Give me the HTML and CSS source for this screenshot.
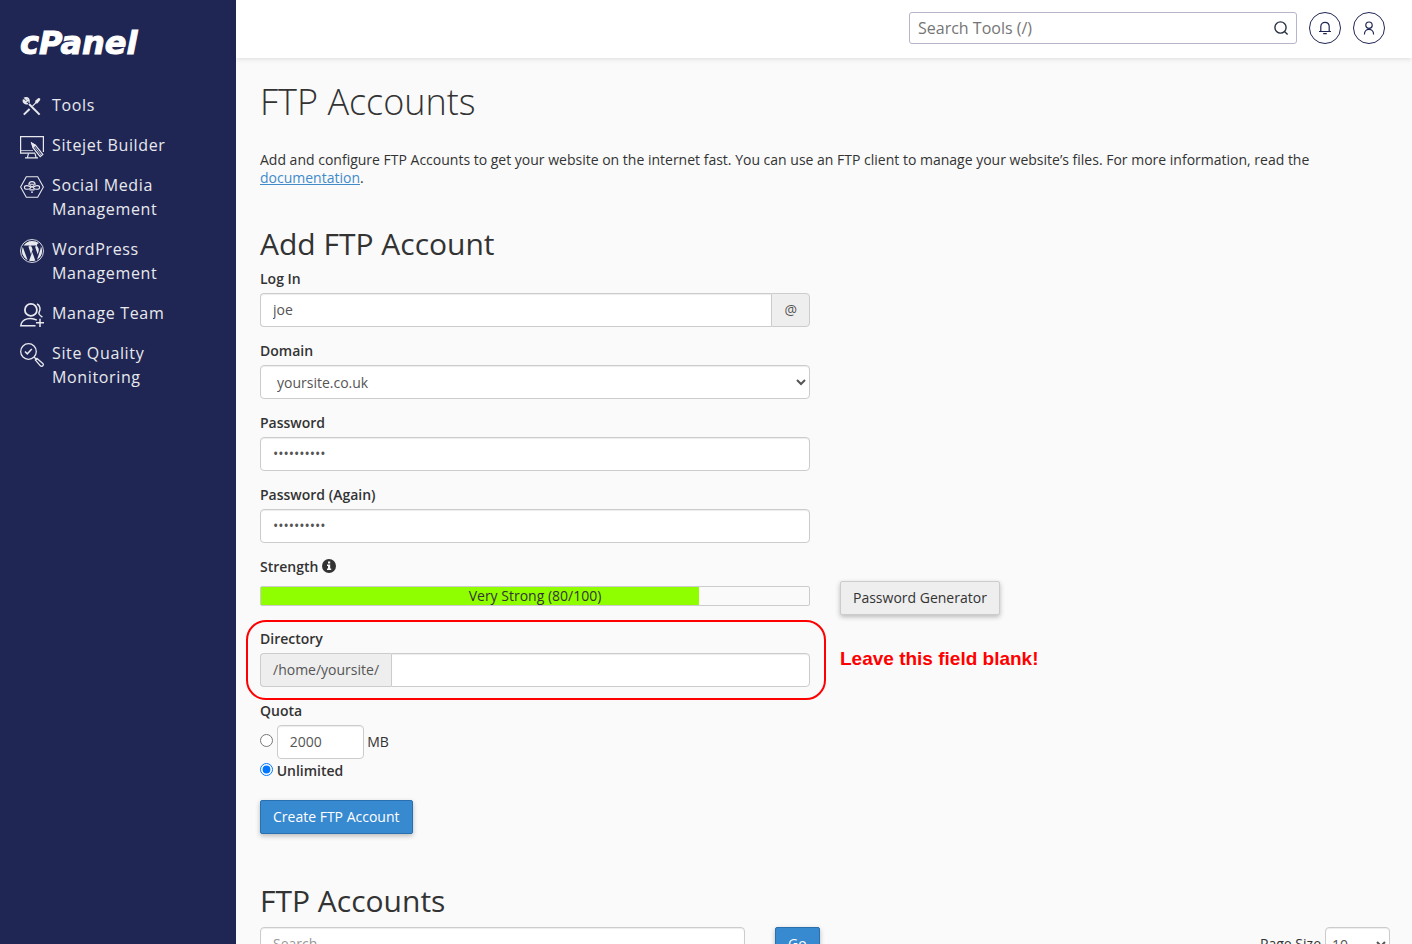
FILE: index.html
```html
<!DOCTYPE html>
<html lang="en">
<head>
  <meta charset="UTF-8" />
  <meta name="viewport" content="width=device-width, initial-scale=1.0"/>
  <title>cPanel - FTP Accounts</title>
  <link rel="stylesheet" href="styles.css">
</head>
<body>

<!-- Sidebar -->
<aside class="sidebar">
  <a href="#" class="logo">cPanel</a>
  <nav class="nav">
    <a href="#">
      <svg viewBox="0 0 24 24" fill="none" stroke="currentColor">
        <path d="M9 9L19.6 19.6" stroke-width="2"/>
        <path d="M3.4 4.6L6 7.2L7.6 5.6L5 3C7.6 2 10 4.4 9 7.8M3.4 4.6C2.8 7.4 5 9.4 8 8.4" stroke-width="1.6"/>
        <path d="M3.8 19.6L9.6 14" stroke-width="2"/>
        <path d="M12.5 11.2L15.5 8.2" stroke-width="1.2"/>
        <path d="M14.8 8.8L15.5 5.6L18.5 3L20.2 3.4L20.2 5L17.6 8.2Z" fill="currentColor" stroke="none"/>
      </svg>
      <span>Tools</span>
    </a>
    <a href="#">
      <svg viewBox="0 0 24 24" fill="none" stroke="currentColor" stroke-width="1.2">
        <path d="M15 18.2H.6V1.6H23.4V17"/>
        <path d="M.6 15.6H13" stroke-width=".8"/>
        <path d="M8.5 18.4L7.5 22.4M15 18.4L16 22.4M5 22.8H18"/>
        <path d="M11.8 8.2L13 12.6L20.2 21.6L22.8 19.4L15.6 10.4Z"/>
        <path d="M11.8 8.2L13.2 12L15.4 10.4Z" fill="currentColor"/>
        <path d="M14.5 11.8L21.2 20.2" stroke-width=".8"/>
      </svg>
      <span>Sitejet Builder</span>
    </a>
    <a href="#">
      <svg viewBox="0 0 24 24" fill="none" stroke="currentColor" stroke-width="1.1">
        <path d="M6.3 1.7H17.7L23.4 12L17.7 22.3H6.3L.6 12Z"/>
        <path d="M8.8 9.2C9.4 5.8 14.6 5.8 15.2 9.2Z"/>
        <path d="M10 10.4L12 12.2L14 10.4"/>
        <path d="M10.8 12.4C9 10 4.4 10 4.4 12.4C4.4 14.8 9.6 15 10.8 12.4Z"/>
        <path d="M13.2 12.4C15 10 19.6 10 19.6 12.4C19.6 14.8 14.4 15 13.2 12.4Z"/>
        <path d="M9.6 14.8H14.4M11 17.2H13" stroke-width="1.3"/>
      </svg>
      <span>Social Media Management</span>
    </a>
    <a href="#">
      <svg viewBox="0 0 24 24" fill="currentColor">
        <circle cx="12" cy="12" r="11.5" fill="none" stroke="currentColor" stroke-width=".9"/>
        <path d="M12 1.9C8.5 1.9 5.4 3.7 3.6 6.4H9.6V7.2L8.4 7.4L11 15.4L12.6 10.6L11.5 7.4L10.5 7.2V6.4H16.4V7.2L15 7.4L17.7 15.4L18.5 12.7C19.8 9 17 8.3 17 6.3C17 5 17.9 4.1 19 4.2C17.1 2.8 14.7 1.9 12 1.9Z"/>
        <path d="M2.8 7.9C.6 12.9 2.9 18.7 7.6 21.1Z"/>
        <path d="M12.2 12.9L9.1 21.7C11.1 22.3 13.3 22.2 15.3 21.5Z"/>
        <path d="M20.9 7.2C20.9 9.6 20 11.8 17 20.7C21.8 17.8 23.4 12 20.9 7.2Z"/>
      </svg>
      <span>WordPress Management</span>
    </a>
    <a href="#">
      <svg viewBox="0 0 24 24" fill="none" stroke="currentColor" stroke-width="1.5">
        <circle cx="10.9" cy="6.9" r="6" stroke-width="1.8"/>
        <path d="M17 1C20 2.2 21 6.5 19 9.5C18.2 10.8 19.4 12 22.4 14.2"/>
        <path d="M16.8 17.2C11.5 14 1.5 15 .8 22.8H15.5M16 19.8H24M20 15.8V24"/>
      </svg>
      <span>Manage Team</span>
    </a>
    <a href="#">
      <svg viewBox="0 0 24 24" fill="none" stroke="currentColor" stroke-width="1.3">
        <circle cx="8.5" cy="8.5" r="7.8"/>
        <path d="M5 8.4L7.3 10.8L11.8 6" stroke-width="1.5"/>
        <path d="M14 14L17 17"/>
        <path d="M15.4 17L17 15.4L22.8 20.4C24.4 22 22 24.4 20.4 22.8Z"/>
      </svg>
      <span>Site Quality Monitoring</span>
    </a>
  </nav>
</aside>

<div class="page">
  <!-- Top bar -->
  <header class="topbar">
    <div class="tool-search">
      <input type="text" placeholder="Search Tools (/)" aria-label="Search Tools">
      <button type="button" aria-label="Search">
        <svg viewBox="0 0 16 16" fill="none" stroke="currentColor" stroke-width="1.4">
          <circle cx="7.5" cy="7.5" r="5.6"/>
          <path d="M11.5 11.5L14.6 14.6"/>
        </svg>
      </button>
    </div>
    <button type="button" class="round-btn" aria-label="Notifications">
      <svg viewBox="0 0 16 16" fill="none" stroke="currentColor" stroke-width="1.2">
        <path d="M2 11.5H14M3.8 11.5V6.5C3.8 1 12.2 1 12.2 6.5V11.5M6.2 13.6H9.8"/>
      </svg>
    </button>
    <button type="button" class="round-btn" aria-label="Account">
      <svg viewBox="0 0 16 16" fill="none" stroke="currentColor" stroke-width="1.2">
        <circle cx="8" cy="5.2" r="3.2"/>
        <path d="M3.4 14.4C3.4 7.8 12.6 7.8 12.6 14.4"/>
      </svg>
    </button>
  </header>

  <main class="content">
    <h1>FTP Accounts</h1>
    <p class="intro">Add and configure FTP Accounts to get your website on the internet fast. You can use an FTP client to manage your website’s files. For more information, read the <a href="#">documentation</a>.</p>

    <h2>Add FTP Account</h2>
    <form class="ftp-form">
      <div class="form-group">
        <label for="login">Log In</label>
        <div class="input-group">
          <input type="text" id="login" class="form-control" value="joe">
          <span class="addon">@</span>
        </div>
      </div>

      <div class="form-group">
        <label for="domain">Domain</label>
        <select id="domain" class="form-control">
          <option>yoursite.co.uk</option>
        </select>
      </div>

      <div class="form-group">
        <label for="password">Password</label>
        <input type="password" id="password" class="form-control" value="password12">
      </div>

      <div class="form-group">
        <label for="password2">Password (Again)</label>
        <input type="password" id="password2" class="form-control" value="password12">
      </div>

      <div class="form-group strength-group">
        <span class="label">Strength
          <svg class="info" viewBox="0 0 14 14">
            <circle cx="7" cy="7" r="7" fill="#333"/>
            <path d="M6 2.6H8.2V4.4H6ZM5 5.6H8.2V9.6H9.2V11H5V9.6H6V7H5Z" fill="#fafafa"/>
          </svg>
        </span>
        <div class="strength-row">
          <div class="meter">
            <div class="meter-fill" style="width: 80%"></div>
            <span class="meter-text">Very Strong (80/100)</span>
          </div>
          <button type="button" class="btn">Password Generator</button>
        </div>
      </div>

      <div class="form-group directory-row">
        <div class="directory">
          <label for="directory">Directory</label>
          <div class="input-group">
            <span class="addon">/home/yoursite/</span>
            <input type="text" id="directory" class="form-control">
          </div>
        </div>
        <strong class="note">Leave this field blank!</strong>
      </div>

      <div class="form-group quota">
        <span class="label">Quota</span>
        <div class="quota-line">
          <input type="radio" name="quota" aria-label="Limited quota">
          <input type="text" class="form-control quota-size" value="2000" aria-label="Quota in MB">
          <span>MB</span>
        </div>
        <div class="quota-line">
          <input type="radio" name="quota" id="unlimited" checked>
          <label for="unlimited">Unlimited</label>
        </div>
      </div>

      <button type="button" class="btn btn-primary">Create FTP Account</button>
    </form>

    <h2>FTP Accounts</h2>
    <div class="table-tools">
      <input type="text" class="form-control table-search" placeholder="Search" aria-label="Search accounts">
      <button type="button" class="btn btn-primary">Go</button>
      <div class="page-size">
        <label for="page-size">Page Size</label>
        <select id="page-size" class="form-control">
          <option>10</option>
        </select>
      </div>
    </div>
  </main>
</div>

</body>
</html>
```
FILE: styles.css
```css
* { box-sizing: border-box; }

body {
  margin: 0;
  display: flex;
  height: 100vh;
  font-family: "Open Sans", "Noto Sans", sans-serif;
  font-size: 14px;
  line-height: 18px;
  color: #333;
  background: #fafafa;
}

input, select, button {
  font-family: inherit;
  font-size: inherit;
  line-height: inherit;
}

/* Sidebar */
.sidebar {
  flex: 0 0 236px;
  padding: 24px 20px;
  background: #202653;
  color: #e8e9ee;
}

.logo {
  display: block;
  margin-bottom: 23px;
  font-family: "DejaVu Sans", sans-serif;
  font-size: 32px;
  font-weight: bold;
  font-style: italic;
  line-height: 38px;
  color: #fff;
  -webkit-text-stroke: 1px #fff;
  text-decoration: none;
}

.nav a {
  display: flex;
  align-items: flex-start;
  gap: 8px;
  padding: 8px 0;
  font-size: 16px;
  line-height: 24px;
  letter-spacing: 0.04em;
  color: inherit;
  text-decoration: none;
}

.nav svg {
  flex: none;
  width: 24px;
  height: 24px;
  margin: 2px 0 -2px;
}

/* Page */
.page {
  flex: 1;
  min-width: 0;
  display: flex;
  flex-direction: column;
}

.topbar {
  position: relative;
  flex: none;
  display: flex;
  justify-content: flex-end;
  align-items: center;
  gap: 12px;
  padding: 12px 27px 14px;
  background: #fff;
  box-shadow: 0 1px 5px rgba(0, 0, 0, 0.12);
}

.tool-search {
  display: flex;
  align-items: center;
  width: 388px;
  height: 32px;
  border: 1px solid #b7b5c9;
  border-radius: 3px;
}

.tool-search input {
  flex: 1;
  min-width: 0;
  padding: 0 8px;
  border: 0;
  background: none;
  font-size: 16px;
  line-height: 24px;
}

.tool-search input::placeholder { color: #757575; }

.tool-search button {
  display: flex;
  padding: 0 7px;
  border: 0;
  background: none;
  color: #2a3344;
}

.tool-search svg,
.round-btn svg {
  width: 16px;
  height: 16px;
}

.round-btn {
  display: flex;
  align-items: center;
  justify-content: center;
  width: 32px;
  height: 32px;
  padding: 0;
  border: 1px solid #202653;
  border-radius: 50%;
  background: #fff;
  color: #202653;
}

.content {
  flex: 1;
  min-height: 0;
  overflow-y: auto;
  scrollbar-width: none;
  padding: 24px 22px 24px 24px;
}

h1 {
  margin: 0 0 29px;
  font-size: 36px;
  font-weight: 300;
  line-height: 40px;
}

h2 {
  margin: 0 0 10px;
  font-size: 30px;
  font-weight: 500;
  line-height: 33px;
}

.intro { margin: 0 0 40px; }
.intro a { color: #428bca; }

/* Forms */
.ftp-form { margin-bottom: 50px; }

.form-group {
  width: calc(50% - 15px);
  margin-bottom: 15px;
}

.form-group label,
.label {
  display: block;
  margin-bottom: 5px;
  font-weight: 600;
}

.form-control {
  display: block;
  width: 100%;
  height: 34px;
  padding: 6px 12px;
  border: 1px solid #ccc;
  border-radius: 4px;
  background-color: #fff;
  box-shadow: inset 0 1px 1px rgba(0, 0, 0, 0.075);
  color: #555;
}

input.form-control { padding-bottom: 8px; }

.form-control::placeholder { color: #999; }

.input-group { display: flex; }

.input-group .form-control {
  flex: 1;
  min-width: 0;
}

.addon {
  padding: 7px 12px;
  border: 1px solid #ccc;
  border-radius: 4px;
  background: #eee;
  color: #555;
}

.addon:first-child,
.input-group .form-control:first-child {
  border-right: 0;
  border-top-right-radius: 0;
  border-bottom-right-radius: 0;
}

.addon:last-child,
.input-group .form-control:last-child {
  border-top-left-radius: 0;
  border-bottom-left-radius: 0;
}

.btn {
  height: 34px;
  padding: 0 12px;
  border: 1px solid #ccc;
  border-radius: 2px;
  background: #eee;
  box-shadow: 0 2px 5px rgba(0, 0, 0, 0.26);
  color: #333;
  white-space: nowrap;
}

.btn-primary {
  border-color: #2a6fb0;
  background: #3789d0;
  color: #fff;
}

/* Password strength */
.form-group.strength-group,
.form-group.directory-row { width: 100%; }

.info {
  width: 14px;
  height: 14px;
  vertical-align: -1px;
}

.strength-row,
.directory-row {
  display: grid;
  grid-template-columns: 1fr 1fr;
  column-gap: 30px;
}

.strength-row { align-items: start; }
.strength-row .btn { justify-self: start; }

.meter {
  position: relative;
  height: 20px;
  margin-top: 5px;
  border: 1px solid #ccc;
  border-radius: 2px;
  text-align: center;
}

.meter-fill {
  height: 100%;
  background: #8fff00;
}

.meter-text {
  position: absolute;
  inset: 0;
}

/* Directory with the red outline round it */
.directory { position: relative; }

.directory::after {
  content: '';
  position: absolute;
  inset: -10px -16px -13px -14px;
  border: 2px solid #f00;
  border-radius: 20px;
  pointer-events: none;
}

.note {
  align-self: center;
  font-family: "Liberation Sans", Arial, sans-serif;
  font-size: 19px;
  color: #f00;
}

/* Quota */
.form-group.quota { margin-bottom: 20px; }

.quota-line input[type="radio"] { margin: 4px 0 0; }

.quota-line .form-control,
.quota-line label {
  display: inline-block;
  margin: 0;
}

.quota-line .quota-size { width: 87px; }

/* Accounts table tools */
.table-tools {
  display: flex;
  gap: 30px;
}

.table-search { width: calc(50% - 80px); }

.page-size {
  display: flex;
  align-items: center;
  gap: 4px;
  margin-left: auto;
}

.page-size .form-control {
  width: 65px;
  padding: 6px 2px;
}
```
